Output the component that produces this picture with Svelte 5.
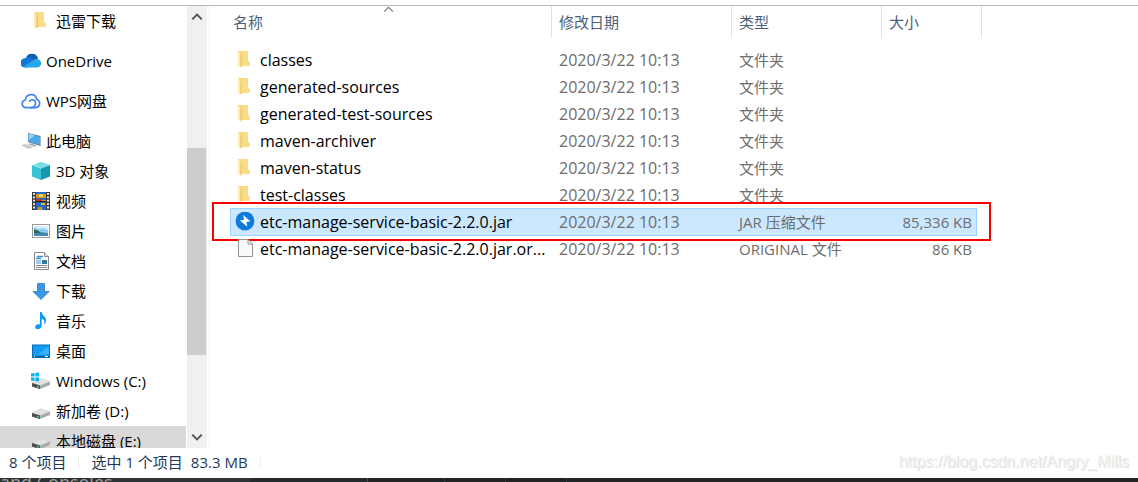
<script>
  const places = [
    { icon: 'folder', label: '迅雷下载', child: true, gap: true },
    { icon: 'onedrive', label: 'OneDrive', gap: true },
    { icon: 'wps', label: 'WPS网盘', gap: true },
    { icon: 'pc', label: '此电脑' },
    { icon: 'cube', label: '3D 对象', child: true },
    { icon: 'video', label: '视频', child: true },
    { icon: 'picture', label: '图片', child: true },
    { icon: 'document', label: '文档', child: true },
    { icon: 'download', label: '下载', child: true },
    { icon: 'music', label: '音乐', child: true },
    { icon: 'desktop', label: '桌面', child: true },
    { icon: 'windrive', label: 'Windows (C:)', child: true },
    { icon: 'drive', label: '新加卷 (D:)', child: true },
    { icon: 'drive', label: '本地磁盘 (E:)', child: true, current: true },
  ];
  const date = '2020/3/22 10:13';
  const files = [
    ...['classes', 'generated-sources', 'generated-test-sources', 'maven-archiver', 'maven-status', 'test-classes'].map(
      (name) => ({ icon: 'folder', name, type: '文件夹', size: '' })
    ),
    { icon: 'jar', name: 'etc-manage-service-basic-2.2.0.jar', type: 'JAR 压缩文件', size: '85,336 KB', selected: true },
    { icon: 'file', name: 'etc-manage-service-basic-2.2.0.jar.or...', type: 'ORIGINAL 文件', size: '86 KB' },
  ];
</script>

{#snippet drive()}
  <path d="M1 12 L10 7.5 L19 10.5 V14 L9 18 L1 15.5Z" fill="#a9abad" />
  <path d="M1 12 L10 7.5 L19 10.5 L9 14.5Z" fill="#dfe1e2" />
  <path d="M1 12 L9 14.5 V18 L1 15.5Z" fill="#4b4e50" />
  <rect x="6" y="15" width="2" height="1.5" fill="#3ddc55" />
{/snippet}

{#snippet icon(name)}
  <svg class="icon" viewBox="0 0 20 20" aria-hidden="true">
    {#if name === 'folder'}
      <path d="M3 1 H13 V11 L14.5 12 V16 H3Z" fill="#f6d476" />
      <path d="M7 1 H13 V11 L14.5 12 V16 H7Z" fill="#f9dc84" />
      <path d="M3 1 L6 3.5 V18 L3 16Z" fill="#ffebb0" />
      <path d="M6 4 V17" stroke="#e8bd55" stroke-width="1" />
    {:else if name === 'onedrive'}
      <path d="M5 7 A6.3 6.3 0 0 1 17 7.5 L10 12Z" fill="#0a5fb4" />
      <path d="M4 16.5 A4.6 4.6 0 0 1 4 7.3 A5.2 5.2 0 0 1 9.5 6.6 L16 11 L7 16.5Z" fill="#0f78d4" />
      <path d="M2.5 15.5 L12 9.5 A4.5 4.5 0 0 1 16.5 8 A4.3 4.3 0 0 1 16.5 16.5 H4.5Z" fill="#28a8ea" />
    {:else if name === 'wps'}
      <g fill="none" stroke="#4284f4" stroke-width="1.7" stroke-linecap="round">
        <path d="M11 16.7 H4.8 A3.9 3.9 0 0 1 4.3 9 A5.9 5.9 0 0 1 15.7 7.4" />
        <path d="M8.5 10.2 A3.3 3.3 0 0 1 14.5 11.8 C14.5 14.7 13 16.7 10.5 16.7" />
        <path d="M15.4 8.3 A4.3 4.3 0 0 1 15 16.7 H11" />
      </g>
    {:else if name === 'pc'}
      <path d="M7 2 L19.5 5 V15 L7 11Z" fill="#58717f" />
      <path d="M7.5 2.6 L19 5.5 V14 L7.5 10.4Z" fill="#4aa9e8" />
      <path d="M7.5 2.6 L14 4.2 L7.5 9.4Z" fill="#8fd0f6" />
      <path d="M8 12 L15 14 V16 L8 14Z" fill="#a8b2b8" />
      <path d="M0 14.2 L5 12.7 L13 16 L7.5 18Z" fill="#d3d6d8" />
      <path d="M1.5 14.4 L9.5 17" stroke="#a5abaf" stroke-width=".6" />
    {:else if name === 'cube'}
      <path d="M10 1 L19 4 L10 7.5 L1 4Z" fill="#a7e9ef" />
      <path d="M1 4 L10 7.5 V19 L1 15.5Z" fill="#39c3d3" />
      <path d="M19 4 L10 7.5 V19 L19 15.5Z" fill="#1597ad" />
      <path d="M4 3 L10 1 L19 4 L10 7.5Z" fill="#78dbe5" />
    {:else if name === 'video'}
      <rect x="1" y="1" width="18" height="18" fill="#3a3a3a" />
      <rect x="5" y="1" width="10" height="18" fill="#2868c8" />
      <path d="M5 3 H15 V7 H5Z M11 9 H15 V11 H11Z M7 16 H11 V19 H7Z" fill="#c89a29" />
      <path d="M8 3 H12 V6 H8Z" fill="#e7d750" />
      <path d="M5 8 H10 V10 H5Z" fill="#c83425" />
      <path d="M5 10 H15 V11.2 H5Z" fill="#222" />
      <path d="M10 12 H14 V14 H10Z" fill="#e0b736" />
      <path d="M3 2 V19 M17 2 V19" stroke="#f2f2f2" stroke-width="2" stroke-dasharray="1.8 1.6" />
    {:else if name === 'picture'}
      <rect x="1.5" y="3.5" width="17" height="13" fill="#fff" stroke="#9a9a9a" />
      <rect x="3" y="5" width="14" height="10" fill="#8ecdf4" />
      <path d="M3 6 L8 8 L12 7 L17 9 V5 H3Z" fill="#d8f0fc" />
      <path d="M3 8.5 Q7 9 10 11.5 L17 12 V13 H3Z" fill="#31665a" />
      <path d="M3 12 H17 V15 H3Z" fill="#4387b4" />
    {:else if name === 'document'}
      <path d="M3.5 1.5 H13.5 L17.5 5.5 V18.5 H3.5Z" fill="#fff" stroke="#898989" />
      <path d="M13.5 1.5 V5.5 H17.5" fill="#e8e8e8" stroke="#898989" />
      <path d="M6 5.5 H12 M5 7.5 H10" stroke="#2d8ed6" stroke-width="1.4" />
      <path d="M5 10 H10 M5 12 H10" stroke="#3d99dc" />
      <rect x="11" y="9" width="5" height="4" fill="#347a9c" />
      <path d="M5 14.5 H16 M5 16.5 H16" stroke="#8a8a8a" />
    {:else if name === 'download'}
      <path d="M6.5 2.5 H13.5 V10.5 H18 L10 18.5 L2 10.5 H6.5Z" fill="#3c97e4" stroke="#2878c0" stroke-width=".8" />
    {:else if name === 'music'}
      <path d="M9 1 H10.7 C11 5 15.3 5.5 15 9.5 C15 11 14 13 13 13.5 C14 10 13 8.5 10.7 7.8 V15 C10.7 17 8.5 18.3 6.5 18.2 C3.5 18 3.5 14.5 6.2 13.6 C7.3 13.2 8.2 13.3 9 13.6Z" fill="#0a9cf5" />
    {:else if name === 'desktop'}
      <rect x="1.5" y="4" width="17" height="12.5" fill="#129cf5" stroke="#0b6cb2" />
      <path d="M18 5 V13.5 H7Z" fill="#39b0fb" />
      <path d="M2 15.5 H18" stroke="#075a96" stroke-width="1.2" />
      <path d="M3 15.5 H4 M14 15.5 H17" stroke="#fff" />
    {:else if name === 'windrive'}
      {@render drive()}
      <path d="M0 2.5 L3.6 2 V5.6 H0Z M4.4 1.9 L8 1.4 V5.6 H4.4Z M0 6.4 H3.6 V10 L0 9.5Z M4.4 6.4 H8 V10.6 L4.4 10.1Z" fill="#08b2ef" />
    {:else if name === 'drive'}
      {@render drive()}
    {:else if name === 'jar'}
      <circle cx="10" cy="9" r="9.4" fill="#0d7add" />
      <path d="M8.2 3 L15.4 9.3 L11.3 10 L12.5 14.8 L4.8 8.6 L9 7.8Z" fill="#fff" />
    {:else if name === 'file'}
      <path d="M3.5 .5 H13 L17.5 5 V17.5 H3.5Z" fill="#fafafa" stroke="#929292" />
      <path d="M13 .5 V5 H17.5" fill="none" stroke="#929292" />
    {/if}
  </svg>
{/snippet}

<div class="window">
  <main>
    <nav aria-label="位置">
      {#each places as p}
        <a href="#place" class:child={p.child} class:gap={p.gap} class:current={p.current}>
          {@render icon(p.icon)}<span>{p.label}</span>
        </a>
      {/each}
    </nav>
    <div class="scroll">
      <button aria-label="向上"><svg viewBox="0 0 10 6"><path d="M1 5 L5 1 L9 5" /></svg></button>
      <div class="track"><div class="thumb"></div></div>
      <button aria-label="向下"><svg viewBox="0 0 10 6"><path d="M1 1 L5 5 L9 1" /></svg></button>
    </div>
    <section>
      <table>
        <colgroup><col class="name" /><col class="date" /><col class="type" /><col class="size" /></colgroup>
        <thead>
          <tr>
            <th><button>名称</button><svg class="sort" viewBox="0 0 10 6"><path d="M1 5 L5 1 L9 5" /></svg></th>
            <th><button>修改日期</button></th>
            <th><button>类型</button></th>
            <th><button>大小</button></th>
          </tr>
        </thead>
        <tbody>
          {#each files as f}
            <tr class:selected={f.selected}>
              <td>
                {#if f.selected}<div class="highlight"></div><div class="marker"></div>{/if}
                <div class="entry">{@render icon(f.icon)}<span>{f.name}</span></div>
              </td>
              <td class="when">{date}</td>
              <td>{f.type}</td>
              <td>{f.size}</td>
            </tr>
          {/each}
        </tbody>
      </table>
    </section>
  </main>
  <footer>
    <span class="count">8 个项目</span>
    <span class="picked">选中 1 个项目</span>
    <span class="total">83.3 MB</span>
    <span class="credit">https://blog.csdn.net/Angry_Mills</span>
  </footer>
  <div class="behind"><span>and Consoles</span><i></i><i></i><i></i></div>
</div>

<style>
  :global(body) { margin: 0; background: #fff; }
  .window {
    display: flex;
    flex-direction: column;
    height: 100vh;
    padding-top: 5px;
    box-sizing: border-box;
    overflow: hidden;
    font: 15px/20px "Open Sans", "Noto Sans CJK SC", sans-serif;
    color: #000;
  }
  main { display: flex; flex: 1; min-height: 0; border-top: 1px solid #b9b9b9; }
  .icon { width: 20px; height: 20px; flex: none; }
  nav { width: 186px; flex: none; overflow: hidden; margin-right: 1px; }
  nav a {
    display: flex;
    align-items: center;
    gap: 5px;
    height: 30px;
    padding-left: 21px;
    color: inherit;
    text-decoration: none;
    white-space: nowrap;
  }
  nav a.child { padding-left: 31px; }
  nav a.gap { margin-bottom: 10px; }
  nav a.current { background: #d9d9d9; }
  button { font: inherit; color: inherit; background: none; border: 0; padding: 0; }
  .scroll { display: flex; flex-direction: column; width: 20px; background: #f0f0f0; flex: none; }
  .scroll button { display: flex; align-items: center; justify-content: center; height: 22px; }
  .scroll svg { width: 12px; height: 8px; fill: none; stroke: #555; stroke-width: 1.7; }
  .track { flex: 1; display: flex; flex-direction: column; }
  .track::before { content: ""; flex: 120; }
  .thumb { flex: 207; width: 19px; background: #cdcdcd; }
  .track::after { content: ""; flex: 71; }
  section { flex: 1; min-width: 0; margin-left: 2px; border-left: 1px solid #f3f3f3; padding-left: 20px; }
  table { width: 752px; table-layout: fixed; border-collapse: separate; border-spacing: 0; }
  col.name { width: 322px; }
  col.date { width: 180px; }
  col.type { width: 150px; }
  col.size { width: 100px; }
  th {
    position: relative;
    height: 32px;
    padding: 0 0 0 7px;
    border-right: 1px solid #e3e3e3;
    text-align: left;
    font-weight: 400;
    color: #4c607a;
  }
  th:first-child { padding-left: 3px; }
  .sort { position: absolute; top: 0; left: 153px; width: 11px; height: 7px; fill: none; stroke: #777; }
  tbody::before { content: ""; display: block; height: 8px; }
  tbody tr { position: relative; }
  td { height: 27px; padding: 0 0 0 7px; color: #6d6d6d; white-space: nowrap; }
  td:first-child { padding-left: 5px; color: #000; font-size: 16px; }
  td.when { font-size: 16px; }
  td:last-child { padding-right: 10px; text-align: right; }
  .entry { display: flex; align-items: center; gap: 5px; }
  .selected { z-index: 0; }
  .highlight {
    position: absolute;
    inset: 0 5px -1px 0;
    z-index: -1;
    background: #cce8ff;
    border: 1px solid #99d1ff;
  }
  .marker { position: absolute; inset: -6px -9px -6px -18px; border: 2px solid #f80000; }
  footer {
    display: flex;
    align-items: center;
    height: 30px;
    flex: none;
    box-sizing: border-box;
    padding: 0 9px 2px;
    color: #1e395b;
    white-space: nowrap;
  }
  .count, .total { padding-right: 12px; border-right: 1px solid #eee; line-height: 14px; }
  .picked { margin: 0 8px 0 12px; }
  .credit {
    margin-left: auto;
    font: 16px/20px "Liberation Sans", sans-serif;
    color: #f0f0f0;
    text-shadow: 1px 1px 0 #e2e2e2;
  }
  .behind { display: flex; height: 4px; flex: none; overflow: hidden; background: #202224; }
  .behind span {
    width: 367px;
    border-right: 1px solid #4a4d4f;
    background: linear-gradient(90deg, #2d3234 250px, #26292b 250px);
    color: #9a9c9d;
    font-size: 18px;
    line-height: 8px;
  }
  .behind i { width: 60px; border-right: 1px solid #36393b; }
  .behind i:first-of-type { width: 76px; }
</style>
